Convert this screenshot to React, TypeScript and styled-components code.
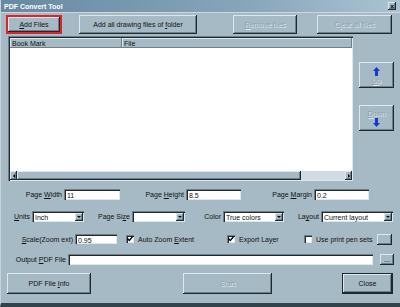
import styled, { createGlobalStyle, css } from "styled-components";

const GlobalStyle = createGlobalStyle`
  html, body { margin: 0; padding: 0; }
  body { font-family: "Liberation Sans", Arial, sans-serif; font-size: 7px; color: #111; }
`;

const face = "#a6bac5";
const light = "#dde7ec";
const shade = "#6d808a";
const dark = "#1f2a30";

const raised = css`
  background: ${face};
  box-shadow: inset -1px -1px 0 ${dark}, inset 1px 1px 0 ${light}, inset -2px -2px 0 ${shade};
`;

const sunken = css`
  background: #fff;
  box-shadow: inset 1px 1px 0 ${shade}, inset 2px 2px 0 ${dark}, inset -1px -1px 0 ${light};
`;

const Window = styled.div`
  width: 400px;
  height: 307px;
  background: ${face};
  display: flex;
  flex-direction: column;
  box-sizing: border-box;
  border-bottom: 4px solid #33434c;
  border-left: 1px solid #c4d4dc;
  overflow: hidden;
`;

const TitleBar = styled.div`
  height: 12px;
  flex: none;
  background: linear-gradient(to right, #6789a1, #86a5b9 60%, #aac3d1);
  display: flex;
  align-items: center;
  justify-content: space-between;
  padding: 0 4px 0 3px;
  color: #fff;
  font-weight: bold;
  font-size: 7px;
  border-bottom: 1px solid #c9d8e0;
`;

const CloseBox = styled.div`
  width: 8px;
  height: 8px;
  ${raised};
  display: flex;
  align-items: center;
  justify-content: center;
  color: #000;
  font-size: 7px;
  line-height: 1;
`;

const Row = styled.div<{ $mt: number; $h: number }>`
  display: flex;
  align-items: center;
  margin-top: ${({ $mt }) => $mt}px;
  height: ${({ $h }) => $h}px;
  flex: none;
`;

const Button = styled.div<{ $w: number; $ml?: number; $disabled?: boolean; $default?: boolean; $h?: number }>`
  width: ${({ $w }) => $w}px;
  height: ${({ $h }) => ($h ? `${$h}px` : "100%")};
  margin-left: ${({ $ml }) => $ml || 0}px;
  box-sizing: border-box;
  flex: none;
  display: flex;
  align-items: center;
  justify-content: center;
  ${raised};
  ${({ $default }) =>
    $default &&
    css`
      box-shadow: inset 0 0 0 1px ${dark}, inset -2px -2px 0 ${dark}, inset 2px 2px 0 ${light}, inset -3px -3px 0 ${shade};
    `}
  color: ${({ $disabled }) => ($disabled ? "#90a3ad" : "#111")};
  text-shadow: ${({ $disabled }) => ($disabled ? `1px 1px 0 ${light}` : "none")};
  white-space: nowrap;
`;

const Highlight = styled.div<{ $ml?: number }>`
  margin-left: ${({ $ml }) => $ml || 0}px;
  height: 19px;
  border: 2px solid #e0232b;
  box-sizing: border-box;
  display: flex;
  flex: none;
`;

const Main = styled.div`
  display: flex;
  margin-top: 2px;
  height: 145px;
  flex: none;
`;

const List = styled.div`
  margin-left: 7px;
  width: 345px;
  height: 145px;
  ${sunken};
  box-sizing: border-box;
  padding: 2px 1px 1px 2px;
  display: flex;
  flex-direction: column;
`;

const Header = styled.div`
  display: flex;
  height: 10px;
  flex: none;
`;

const HeadCell = styled.div<{ $w?: number }>`
  background: ${face};
  box-shadow: inset -1px -1px 0 ${shade}, inset 1px 1px 0 ${light};
  width: ${({ $w }) => ($w ? `${$w}px` : "auto")};
  flex: ${({ $w }) => ($w ? "none" : "1")};
  padding-left: 2px;
  display: flex;
  align-items: center;
`;

const ListBody = styled.div`
  flex: 1;
  background: #fff;
`;

const HScroll = styled.div`
  height: 9px;
  display: flex;
  flex: none;
  background: #cfdce2;
`;

const ScrollBtn = styled.div`
  width: 7px;
  ${raised};
  display: flex;
  align-items: center;
  justify-content: center;
`;

const Thumb = styled.div<{ $w: number }>`
  width: ${({ $w }) => $w}px;
  ${raised};
`;

const Track = styled.div`
  flex: 1;
`;

const Side = styled.div`
  display: flex;
  flex-direction: column;
  margin-left: 6px;
`;

const TallButton = styled(Button)`
  height: 26px;
  flex-direction: column;
  gap: 1px;
`;

const Label = styled.div<{ $w: number }>`
  width: ${({ $w }) => $w}px;
  flex: none;
  text-align: right;
  padding-right: 2px;
  box-sizing: border-box;
  white-space: nowrap;
`;

const Input = styled.div<{ $w: number }>`
  width: ${({ $w }) => $w}px;
  height: 100%;
  flex: none;
  ${sunken};
  box-sizing: border-box;
  padding: 2px 0 0 3px;
  display: flex;
  align-items: center;
`;

const Select = styled(Input)`
  padding-right: 1px;
  justify-content: space-between;
  padding-top: 2px;
  padding-bottom: 1px;
`;

const DropBtn = styled.div`
  width: 8px;
  height: 100%;
  ${raised};
  display: flex;
  align-items: center;
  justify-content: center;
`;

const Check = styled.div<{ $w: number; $ml?: number }>`
  width: ${({ $w }) => $w}px;
  margin-left: ${({ $ml }) => $ml || 0}px;
  flex: none;
  display: flex;
  align-items: center;
  gap: 4px;
  white-space: nowrap;
`;

const Box = styled.div`
  width: 8px;
  height: 8px;
  ${sunken};
  display: flex;
  align-items: center;
  justify-content: center;
`;

const Gap = styled.div<{ $h: number }>`
  height: ${({ $h }) => $h}px;
  flex: none;
`;

const Arrow = ({ up }: { up?: boolean }) => (
  <svg width="7" height="9" viewBox="0 0 7 9">
    {up ? (
      <path d="M3.5 0 L7 4 L5 4 L5 9 L2 9 L2 4 L0 4 Z" fill="#1437d8" />
    ) : (
      <path d="M3.5 9 L7 5 L5 5 L5 0 L2 0 L2 5 L0 5 Z" fill="#1437d8" />
    )}
  </svg>
);

const Tri = ({ dir }: { dir: "down" | "left" | "right" }) => {
  const d = dir === "down" ? "M0 0 L4 0 L2 2 Z" : dir === "left" ? "M2 0 L2 4 L0 2 Z" : "M0 0 L0 4 L2 2 Z";
  const w = dir === "down" ? 4 : 2;
  const h = dir === "down" ? 2 : 4;
  return (
    <svg width={w} height={h} viewBox={`0 0 ${w} ${h}`}>
      <path d={d} fill="#000" />
    </svg>
  );
};

const Tick = () => (
  <svg width="6" height="6" viewBox="0 0 6 6">
    <path d="M0.5 2.5 L2.3 4.5 L5.5 0.8" stroke="#000" strokeWidth="1.3" fill="none" />
  </svg>
);

const App = () => {
  return (
    <>
      <GlobalStyle />
      <Window>
        <TitleBar>
          <span>PDF Convert Tool</span>
          <CloseBox>×</CloseBox>
        </TitleBar>

        <Row $mt={2} $h={19}>
          <Highlight $ml={5}>
            <Button $w={52}>
              <span><u>A</u>dd Files</span>
            </Button>
          </Highlight>
          <Button $w={118} $ml={17} $h={19}>
            <span>Add all drawing files of <u>f</u>older</span>
          </Button>
          <Button $w={64} $ml={36} $h={19} $disabled>
            <span><u>R</u>emove files</span>
          </Button>
          <Button $w={75} $ml={20} $h={19} $disabled>
            <span>C<u>l</u>ear all files</span>
          </Button>
        </Row>

        <Main>
          <List>
            <Header>
              <HeadCell $w={110}>Book Mark</HeadCell>
              <HeadCell>File</HeadCell>
            </Header>
            <ListBody />
            <HScroll>
              <ScrollBtn>
                <Tri dir="left" />
              </ScrollBtn>
              <Thumb $w={284} />
              <Track />
              <ScrollBtn>
                <Tri dir="right" />
              </ScrollBtn>
            </HScroll>
          </List>
          <Side>
            <Gap $h={26} />
            <TallButton $w={35} $disabled>
              <Arrow up />
              <span><u>U</u>p</span>
            </TallButton>
            <Gap $h={17} />
            <TallButton $w={35} $disabled>
              <span><u>D</u>own</span>
              <Arrow />
            </TallButton>
          </Side>
        </Main>

        <Row $mt={8} $h={11}>
          <Label $w={63}>Page <u>W</u>idth</Label>
          <Input $w={56}>11</Input>
          <Label $w={66}>Page <u>H</u>eight</Label>
          <Input $w={55}>8.5</Input>
          <Label $w={73}>Page <u>M</u>argin</Label>
          <Input $w={55}>0.2</Input>
        </Row>

        <Row $mt={11} $h={11}>
          <Label $w={31}><u>U</u>nits</Label>
          <Select $w={52}>
            <span>Inch</span>
            <DropBtn><Tri dir="down" /></DropBtn>
          </Select>
          <Label $w={48}>Page Si<u>z</u>e</Label>
          <Select $w={53}>
            <span />
            <DropBtn><Tri dir="down" /></DropBtn>
          </Select>
          <Label $w={38}>Color</Label>
          <Select $w={61}>
            <span>True colors</span>
            <DropBtn><Tri dir="down" /></DropBtn>
          </Select>
          <Label $w={37}>La<u>y</u>out</Label>
          <Select $w={72}>
            <span>Current layout</span>
            <DropBtn><Tri dir="down" /></DropBtn>
          </Select>
        </Row>

        <Row $mt={12} $h={10}>
          <Label $w={74}><u>S</u>cale(Zoom ext)</Label>
          <Input $w={42}>0.95</Input>
          <Check $w={101} $ml={9}>
            <Box><Tick /></Box>
            <span>Auto Zoom <u>E</u>xtent</span>
          </Check>
          <Check $w={77}>
            <Box><Tick /></Box>
            <span>Export La<u>y</u>er</span>
          </Check>
          <Check $w={73}>
            <Box />
            <span>Use print pen sets</span>
          </Check>
          <Button $w={15} $h={11} />
        </Row>

        <Row $mt={10} $h={11}>
          <Label $w={67}>Output <u>P</u>DF File</Label>
          <Input $w={305} />
          <Button $w={14} $ml={7}>...</Button>
        </Row>

        <Row $mt={8} $h={21}>
          <Button $w={84} $ml={6}>
            <span>PDF File <u>I</u>nfo</span>
          </Button>
          <Button $w={89} $ml={92} $disabled>
            <span>Start</span>
          </Button>
          <Button $w={51} $ml={70} $default>
            <span>Close</span>
          </Button>
        </Row>
      </Window>
    </>
  );
};

export default App;
